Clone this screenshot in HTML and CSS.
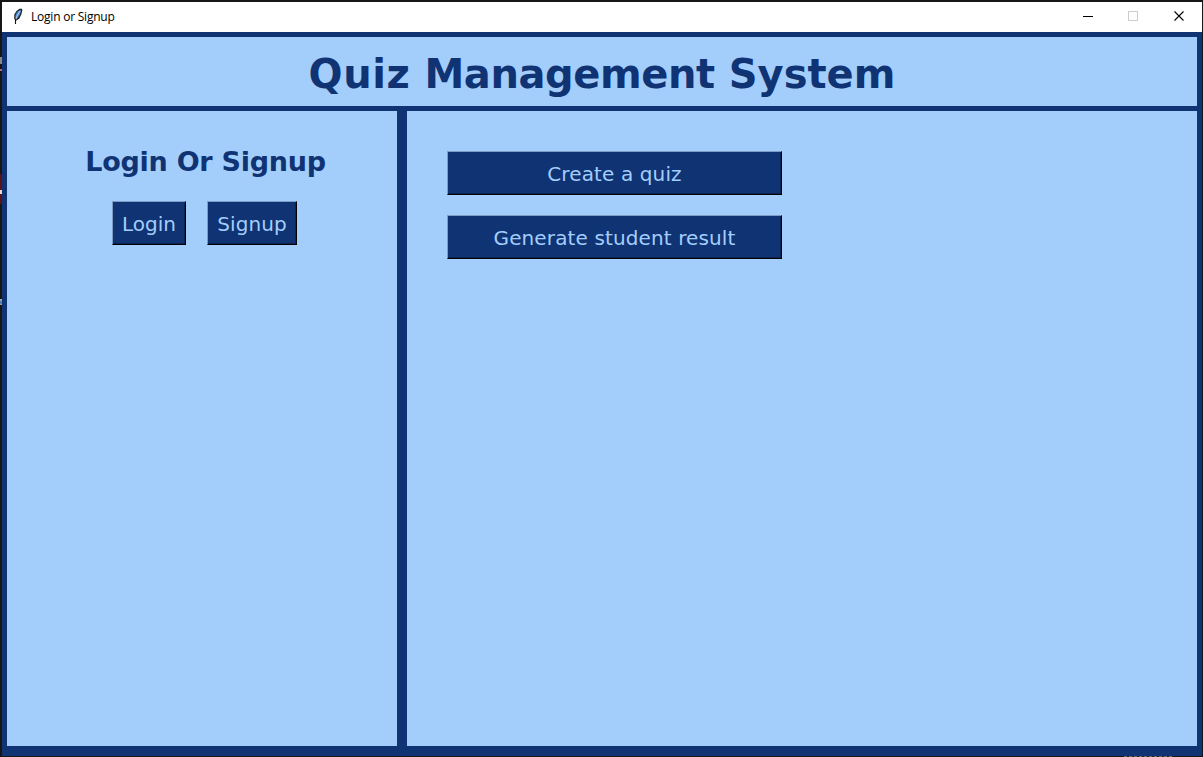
FILE: index.html
```html
<!DOCTYPE html>
<html lang="en">
<head>
<meta charset="utf-8">
<title>Login or Signup</title>
<link rel="stylesheet" href="styles.css">
</head>
<body>
<div class="window">
  <header class="titlebar">
    <svg class="feather" width="10" height="16" viewBox="0 0 10 16">
      <path d="M2.300 12.500 1.200 10.500 1.300 6.500 3.500 3 6.500 .8 9 .8 9.300 2.500 8.300 6.500 6.300 10.500 3.500 12.500z" fill="#1b2026"/>
      <path d="M2.300 10.500 2.500 6.800 4.500 3.600 7.800 1.800 7.900 3.500 7 6.500 5 9.800 3 11z" fill="#4a8ad6"/>
      <path d="M2.600 12 4 8 7.200 2.800" fill="none" stroke="#d1dce6" stroke-width=".8"/>
      <path d="M2.500 16V11" stroke="#111" stroke-width="1.100"/>
    </svg>
    <span class="caption">Login or Signup</span>
    <div class="controls">
      <svg width="12" height="12" viewBox="0 0 12 12" shape-rendering="crispEdges"><path d="M1 6.500H11" stroke="#000"/></svg>
      <svg width="12" height="12" viewBox="0 0 12 12" shape-rendering="crispEdges"><rect x="1.500" y="1.500" width="9" height="9" fill="none" stroke="#ccc"/></svg>
      <svg width="12" height="12" viewBox="0 0 12 12"><path d="M1.500 1.500 10.500 10.500M10.500 1.500 1.500 10.500" stroke="#000" stroke-width="1.100"/></svg>
    </div>
  </header>
  <main class="app">
    <div class="banner"><h1><span class="wide">Quiz</span> <span class="tight">Management</span> System</h1></div>
    <div class="columns">
      <section class="account">
        <h2>Login Or Signup</h2>
        <div class="actions">
          <button class="btn login">Login</button>
          <button class="btn signup">Signup</button>
        </div>
      </section>
      <section class="tools">
        <button class="btn create">Create a quiz</button>
        <button class="btn result">Generate student result</button>
      </section>
    </div>
  </main>
</div>
</body>
</html>
```
FILE: styles.css
```css
* { box-sizing: border-box; }
body {
  margin: 0;
  width: 1203px;
  height: 757px;
  padding: 2px 1px 1px 2px;
  /* sliver of the dark desktop behind the window */
  background:
    linear-gradient(#888 0 7px, transparent 7px 12px, #b66a78 12px 14px, transparent 14px) 0 57px / 2px 20px no-repeat,
    linear-gradient(#5c1218 0 16px, #ddd 16px 20px, #5c1218 20px) 0 174px / 2px 30px no-repeat,
    linear-gradient(#aaa 0 1px, #467ab5 3px 4px, #aaa 6px) 0 299px / 2px 6px no-repeat,
    repeating-linear-gradient(90deg, #666 0 3px, #222 3px 5px) 1124px 756px / 50px 1px no-repeat,
    #161616;
  overflow: hidden;
}
.window { display: flex; flex-direction: column; height: 754px; }
.titlebar {
  display: flex;
  align-items: center;
  height: 30px;
  padding: 0 17px 0 11px;
  background: #fff;
}
.feather { margin: -2px 8px 0 0; }
.caption {
  font: 12px/16px "Open Sans", sans-serif;
  letter-spacing: -0.22px;
  color: #000;
  white-space: nowrap;
}
.controls { display: flex; gap: 33px; margin: -2px 1px 0 auto; }
.controls svg:last-child { margin-left: 1px; margin-right: -1px; }
.app {
  flex: 1;
  display: flex;
  flex-direction: column;
  gap: 5px;
  padding: 5px 5px 10px;
  background: #103374;
  font-family: "DejaVu Sans", sans-serif;
  color: #103374;
}
h1, h2 { margin: 0; white-space: nowrap; text-align: center; }
.banner { height: 69px; background: #a3cefc; }
h1 { font-size: 40px; line-height: 48px; padding-top: 13px; }
.wide { letter-spacing: 0.6px; }
.tight { letter-spacing: -0.4px; }
.columns { flex: 1; display: flex; gap: 10px; }
.account { width: 390px; background: #a3cefc; }
h2 { font-size: 27px; line-height: 34px; padding: 34px 0 0 7px; letter-spacing: -0.27px; }
.actions { display: flex; gap: 21px; margin: 22px 0 0 105px; }
.tools {
  flex: 1;
  display: flex;
  flex-direction: column;
  gap: 20px;
  padding: 40px;
  background: #a3cefc;
}
.btn {
  height: 44px;
  width: 335px;
  padding: 2px 0 0;
  border: 1px solid #000;
  border-top-color: #7e9bc6;
  border-left-color: #7e9bc6;
  background: #103374;
  box-shadow: inset -1px -1px #0b2450;
  color: #a3cefc;
  font: 20px/40px "DejaVu Sans", sans-serif;
  letter-spacing: 0.12px;
  white-space: nowrap;
}
.login { width: 74px; letter-spacing: 0; }
.signup { width: 90px; }
```
